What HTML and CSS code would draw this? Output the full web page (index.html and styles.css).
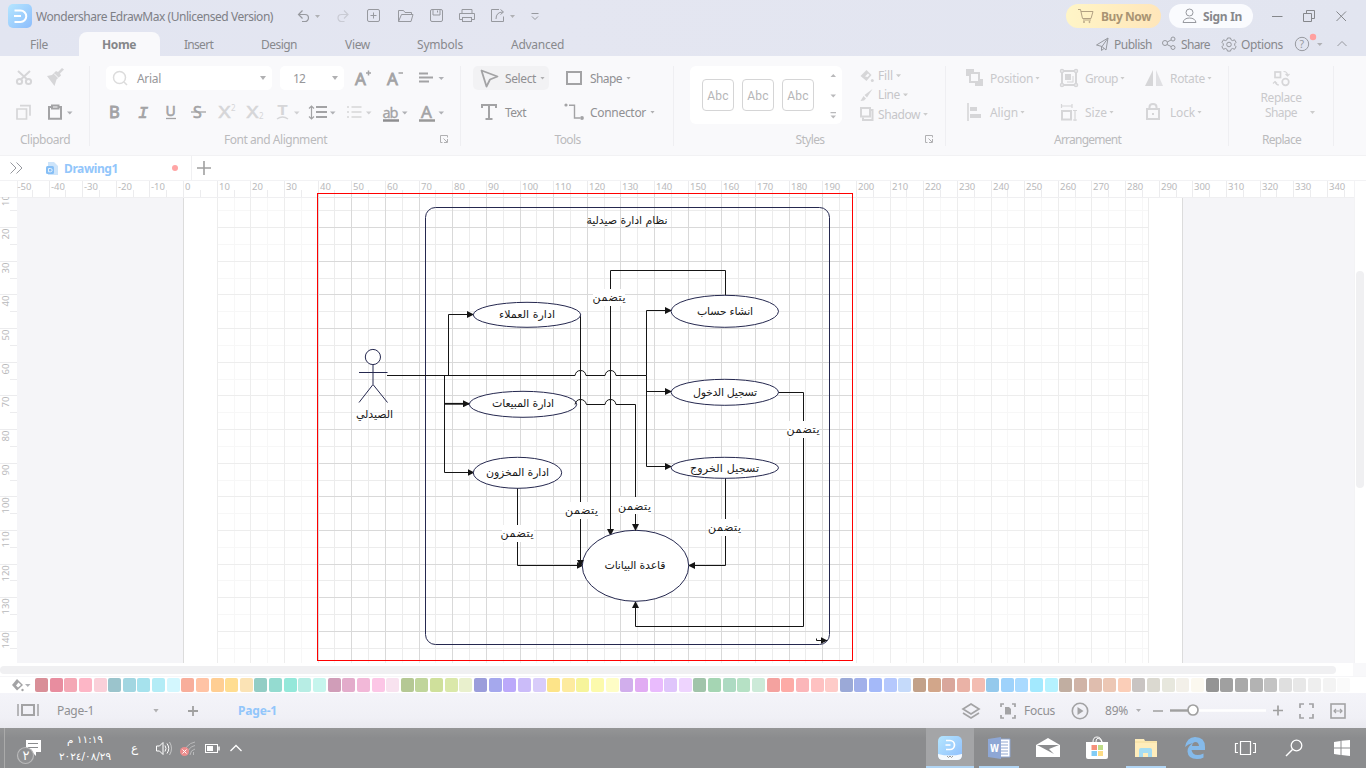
FILE: index.html
```html
<!DOCTYPE html>
<html lang="en">
<head>
<meta charset="utf-8">
<title>Wondershare EdrawMax</title>
<link rel="stylesheet" href="styles.css">
</head>
<body>
<div class="app">
  <header class="head">
    <div class="titlebar">
      <svg class="logo" width="24" height="24" viewBox="0 0 24 24"><defs><linearGradient id="lg" x1="0" y1="0" x2="1" y2="1"><stop offset="0" stop-color="#b5e6ff"/><stop offset="1" stop-color="#8dbdfc"/></linearGradient></defs><rect width="24" height="24" rx="5" fill="url(#lg)"/><path d="M6.500 6.500h6a5.500 5.500 0 0 1 0 11.500h-6M6 12h7" fill="none" stroke="#fff" stroke-width="2"/></svg>
      <span class="app-name"><span class="t" data-w="237">Wondershare EdrawMax (Unlicensed Version)</span></span>
      <svg class="i" width="28" height="20" viewBox="296 6 28 20"><path d="M302.500 10.500l-4 4 4 4M299 14.500h6a3.500 3.500 0 0 1 0 7h-3" stroke-width="1.200"/><path class="c" d="M315 15h5l-2.500 3z"/></svg>
      <svg class="i off" width="16" height="20" viewBox="335 6 16 20"><path d="M344 10.500l4 4-4 4M347.500 14.500h-6a3.500 3.500 0 0 0 0 7h3" stroke-width="1.200"/></svg>
      <svg class="i" width="16" height="20" viewBox="366 6 16 20"><rect x="367.500" y="9.500" width="12" height="12" rx="1.500"/><path d="M373.500 12.500v6M370.500 15.500h6"/></svg>
      <svg class="i" width="18" height="20" viewBox="397 6 18 20"><path d="M398.500 21.500v-11h5l1.500 2h6.500v2M398.500 21.500l3-7h11.500l-2 7z"/></svg>
      <svg class="i" width="16" height="20" viewBox="429 6 16 20"><rect x="430.500" y="9.500" width="12" height="12" rx="1.500"/><path d="M433 9.500v5.500h7v-5.500M437.500 10.500v2"/></svg>
      <svg class="i" width="18" height="20" viewBox="458 6 18 20"><path d="M462 13v-3.500h10V13M462 19.500h-2.500v-6h15v6H472"/><rect x="462.500" y="17.500" width="9" height="4"/></svg>
      <svg class="i" width="26" height="20" viewBox="490 6 26 20"><path d="M499 9.500h-7.500v12h12v-5M496 19q0-7 7-7M500.500 9.500l3 2.500-3 2.500"/><path class="c" d="M510 15h5l-2.500 3z"/></svg>
      <svg class="i" width="10" height="20" viewBox="530 6 10 20"><path d="M531.500 13.500h7M532 16.500l3 3 3-3"/></svg>
      <div class="buy"><svg class="i" width="16" height="16" viewBox="0 0 16 16"><path d="M0 1.500h2.500l2 9h8.500l2-7H3M5 12h8"/><circle cx="6" cy="14" r=".6"/><circle cx="11.500" cy="14" r=".6"/></svg><b class="t" data-w="50">Buy Now</b></div>
      <div class="sign"><svg class="i" width="15" height="16" viewBox="0 0 15 16"><circle cx="7.500" cy="4.500" r="3.500"/><path d="M1 14.500q1-4.500 6.500-4.500t6.500 4.500z"/></svg><b class="t" data-w="39">Sign In</b></div>
      <svg class="i w" width="12" height="20" viewBox="1271 6 12 20"><path d="M1272 16.500h10.500"/></svg>
      <svg class="i w" width="14" height="20" viewBox="1302 6 14 20"><path d="M1303.500 13.500h8v8h-8zM1306.500 13v-2.500h8v8h-2.500"/></svg>
      <svg class="i w" width="12" height="20" viewBox="1335 6 12 20"><path d="M1336.500 11.500l9.500 9.500M1346 11.500l-9.500 9.500"/></svg>
    </div>
    <nav class="menubar">
      <span class="t" data-w="18">File</span>
      <div class="tab-on"><b class="t" data-w="34">Home</b></div>
      <span class="t" data-w="29">Insert</span><span class="t" data-w="36">Design</span><span class="t" data-w="25">View</span><span class="t" data-w="46">Symbols</span><span class="t" data-w="53">Advanced</span>
      <svg class="i" width="16" height="18" viewBox="1095 36 16 18"><path d="M1096.500 46l11.500-7-2 12-4-3.500zM1102 47.500l6-8.500M1101.500 47.500v4l2.500-2"/></svg><span class="t" data-w="38">Publish</span>
      <svg class="i" width="16" height="18" viewBox="1161 36 16 18"><circle cx="1165" cy="44" r="2.500"/><circle cx="1173" cy="40" r="2"/><circle cx="1173" cy="48.500" r="2"/><path d="M1167.300 43l3.700-2M1167 45.500l4 2"/></svg><span class="t" data-w="29">Share</span>
      <svg class="i" width="16" height="18" viewBox="1221 35 16 18"><path d="M1227.500 38h3l.6 1.900 1.500.7 1.900-.8 1.600 2.500-1.400 1.500v1.500l1.400 1.500-1.600 2.500-1.900-.8-1.500.7-.6 1.900h-3l-.6-1.900-1.500-.7-1.900.8-1.600-2.500 1.400-1.500v-1.500l-1.400-1.500 1.600-2.500 1.900.8 1.500-.7z"/><circle cx="1229" cy="44.500" r="2.300"/></svg><span class="t" data-w="42">Options</span>
      <svg class="i" width="29" height="22" viewBox="1294 33 29 22"><circle cx="1302" cy="44" r="6.700"/><text x="1299.500" y="48" font-size="10.500" class="f">?</text><circle cx="1313" cy="37" r="3.200" fill="#ffa09f" stroke="none"/><path class="c" d="M1317 43h5.500l-2.700 3z"/></svg>
      <svg class="i" width="12" height="18" viewBox="1336 35 12 18"><path d="M1337.500 46l4.500-4.500 4.500 4.500"/></svg>
    </nav>
  </header>

  <section class="ribbon">
    <div class="group g-clip">
      <div class="row r-clip1">
        <svg class="k off" width="18" height="20" viewBox="15 68 18 20"><circle cx="19.500" cy="81.500" r="2.600"/><circle cx="28.500" cy="81.500" r="2.600"/><path d="M18 71l9 8.300M30 71l-9 8.300"/></svg>
        <svg class="k off" width="18" height="20" viewBox="46 68 18 20"><path class="f" d="M47 76l5-1 4-4 2 1 4-4 2 1.500-4 4 1 2-4.500 4-2 6.500z"/><path d="M54 73.500l5.500 5.500" stroke="#f9f9fb" stroke-width="1"/></svg>
      </div>
      <div class="row r-clip2">
        <svg class="k off" width="18" height="20" viewBox="15 102 18 20"><path d="M17 109h9.500v10H17zM20 105.700h10v10" stroke-width="1.700"/></svg>
        <svg class="k" width="26" height="20" viewBox="47 102 26 20"><path d="M52 107h-3v11.700h12V107h-3"/><path d="M52 105.500h6.500v3H52z"/><path class="c" d="M67 111.500h5.500l-2.700 3z"/></svg>
      </div>
      <div class="cap"><span class="t" data-w="50">Clipboard</span></div>
    </div>
    <div class="group g-font">
      <div class="row r-font1">
        <div class="box font-box"><svg width="16" height="18" viewBox="112 69 16 18"><circle cx="119.500" cy="77.500" r="6" fill="none" stroke="#dcdcdc" stroke-width="1.500"/><path d="M124 82l3 3" stroke="#dcdcdc" stroke-width="1.500"/></svg><span class="t" data-w="24">Arial</span><i class="car"></i></div>
        <div class="box size-box"><span class="t" data-w="12">12</span><i class="car"></i></div>
        <svg class="k" width="18" height="20" viewBox="354 68 18 20"><text x="355" y="85" font-size="17" class="f" stroke="#a3a3a5" stroke-width=".8" textLength="12">A</text><path d="M368.500 70.500v5M366 73h5" stroke-width="1.500"/></svg>
        <svg class="k" width="18" height="20" viewBox="386 68 18 20"><text x="387" y="85" font-size="17" class="f" stroke="#a3a3a5" stroke-width=".8" textLength="12">A</text><path d="M398.500 73h4.500" stroke-width="1.500"/></svg>
        <svg class="k" width="26" height="20" viewBox="418 68 26 20"><path d="M419 73.500h9M419 77.500h14M419 81.500h10" stroke-width="1.800"/><path class="c" d="M438.500 77h5.500l-2.700 3z"/></svg>
      </div>
      <div class="row r-font2">
        <svg class="k" width="14" height="22" viewBox="108 101 14 22"><text x="109" y="118" font-size="16.500" class="f" stroke="#a3a3a5" stroke-width=".9">B</text></svg>
        <svg class="k" width="14" height="22" viewBox="137 101 14 22"><text x="138" y="118" font-size="17" class="f mono" font-style="italic" stroke="#a3a3a5" stroke-width=".7">I</text></svg>
        <svg class="k" width="14" height="22" viewBox="164 101 14 22"><text x="165.500" y="116" font-size="14" class="f" stroke="#a3a3a5" stroke-width=".6">U</text><path d="M166 118.500h10" stroke-width="1.300"/></svg>
        <svg class="k" width="16" height="22" viewBox="191 101 16 22"><text x="193" y="118" font-size="16" class="f" stroke="#a3a3a5" stroke-width=".6">S</text><path d="M191 112h15" stroke-width="1.300"/></svg>
        <svg class="k off" width="18" height="22" viewBox="218 101 18 22"><text x="218.500" y="118" font-size="16" class="f" textLength="12" lengthAdjust="spacingAndGlyphs" stroke="#d6d6d8" stroke-width=".5">X</text><text x="231" y="111" font-size="8" class="f">2</text></svg>
        <svg class="k off" width="18" height="22" viewBox="246 101 18 22"><text x="246.500" y="118" font-size="16" class="f" textLength="12" lengthAdjust="spacingAndGlyphs" stroke="#d6d6d8" stroke-width=".5">X</text><text x="259" y="119" font-size="8" class="f">2</text></svg>
        <svg class="k off" width="24" height="22" viewBox="276 101 24 22"><text x="277" y="115" font-size="15" class="f mono" font-weight="bold" textLength="11" lengthAdjust="spacingAndGlyphs">T</text><path d="M277 119q5.500-4 11 0" stroke-width="1.400"/><path class="c" d="M294 111.500h5.500l-2.700 3z"/></svg>
        <svg class="k" width="28" height="22" viewBox="308 101 28 22"><path d="M311.500 106v13M309 108.500l2.500-2.500 2.500 2.500M309 116.500l2.500 2.500 2.500-2.500" stroke-width="1.200"/><path d="M316 107h11M316 112h11M316 117h11"/><path class="c" d="M330 111.500h5.500l-2.700 3z"/></svg>
        <svg class="k off" width="26" height="22" viewBox="346 101 26 22"><path d="M351.500 107h10M351.500 112h10M351.500 117h10M347 107h2M347 112h2M347 117h2" stroke-width="1.400"/><path class="c" d="M366 111.500h5.500l-2.700 3z"/></svg>
        <svg class="k" width="26" height="22" viewBox="382 101 26 22"><text x="382.500" y="118" font-size="14.500" class="f" stroke="#a3a3a5" stroke-width=".3" textLength="16">ab</text><path d="M383 120.500h16" stroke="#8e8e90" stroke-width="2.500"/><path class="c" d="M402 111.500h5.500l-2.700 3z"/></svg>
        <svg class="k" width="26" height="22" viewBox="418 101 26 22"><text x="421" y="118" font-size="17" class="f" stroke="#a3a3a5" stroke-width=".6">A</text><path d="M419 120.500h16" stroke="#999" stroke-width="2.500"/><path class="c" d="M438.500 111.500h5.500l-2.700 3z"/></svg>
      </div>
      <div class="cap"><span class="t" data-w="103">Font and Alignment</span><svg class="launch" width="10" height="10" viewBox="0 0 10 10"><path d="M3.500 8.500h-2v-7h7v2M4.500 4.500l3.500 3.500M8.500 5v3.500H5"/></svg></div>
    </div>
    <div class="group g-tools">
      <div class="row r-tools1">
        <div class="sel"><svg class="k" width="20" height="20" viewBox="480 68 20 20"><path d="M481.500 70.500l16 6-7.500 3-3.500 7z" stroke-width="1.800" stroke-linejoin="round"/></svg><span class="t" data-w="31">Select</span><i class="car s"></i></div>
        <svg class="k" width="18" height="20" viewBox="565 68 18 20"><rect x="567" y="72" width="14" height="12"/></svg>
        <span class="on"><span class="t" data-w="32">Shape</span></span><i class="car s"></i>
      </div>
      <div class="row r-tools2">
        <svg class="k" width="18" height="20" viewBox="480 102 18 20"><path d="M482 108v-3h14v3M489 105v14M485.500 119h7" /></svg>
        <span class="on"><span class="t" data-w="21">Text</span></span>
        <svg class="k" width="22" height="20" viewBox="563 102 22 20"><circle cx="566" cy="105" r="1.600" class="f"/><circle cx="582" cy="118" r="1.900" class="f"/><path d="M569 105.200h5.500V118h5.500" stroke-width="1.400"/></svg>
        <span class="on"><span class="t" data-w="56">Connector</span></span><i class="car s"></i>
      </div>
      <div class="cap"><span class="t" data-w="26">Tools</span></div>
    </div>
    <div class="group g-styles">
      <div class="styles-body">
        <div class="gallery"><span>Abc</span><span>Abc</span><span>Abc</span>
          <svg width="8" height="50" viewBox="829 70 8 50"><path fill="#b9b9bb" d="M830.500 77h5.500l-2.700-3zM830.500 94.500h5.500l-2.700 3zM830.500 115.500h5.500l-2.700 3zM830.500 112h5.500v1.200h-5.500z"/></svg></div>
        <div class="fmt">
          <div><svg class="k off" width="14" height="14" viewBox="860 68 14 14"><path class="f" d="M860.500 75l6-6 5 5-5 6z"/><path d="M865 75.500l3-3 1.500 1.500-2 2z" fill="#f9f9fb" stroke="none"/><circle cx="872.300" cy="79.500" r="1.500" class="f"/></svg><span class="t" data-w="15">Fill</span><i class="car s"></i></div>
          <div><svg class="k off" width="14" height="14" viewBox="860 89 14 14"><path class="f" d="M872.500 90l-8 6 2.500 2.500zM863.500 97l2.500 2.500-2 2-3.500.5z"/></svg><span class="t" data-w="22">Line</span><i class="car s"></i></div>
          <div><svg class="k off" width="14" height="14" viewBox="860 109 14 14"><path d="M863 119.500v2.500h9.500v-10H871" /><rect x="861" y="110" width="9" height="8.500"/></svg><span class="t" data-w="42">Shadow</span><i class="car s"></i></div>
        </div>
      </div>
      <div class="cap"><span class="t" data-w="29">Styles</span><svg class="launch" width="10" height="10" viewBox="0 0 10 10"><path d="M3.500 8.500h-2v-7h7v2M4.500 4.500l3.500 3.500M8.500 5v3.500H5"/></svg></div>
    </div>
    <div class="group g-arr">
      <div class="row r-arr">
        <svg class="k off" width="18" height="20" viewBox="966 68 18 20"><path class="f" d="M966 69h8v3h-4v4h-4zM983 86h-8v-3h4v-4h4z"/><rect x="970" y="73" width="9" height="9"/></svg><span><span class="t" data-w="43">Position</span><i class="car s"></i></span>
        <svg class="k off" width="18" height="20" viewBox="1060 68 18 20"><rect x="1062" y="71" width="14" height="14"/><path class="f" d="M1065 74h6v6h-6zM1072.500 76h1v6.500h-6.500v-1h5.500z"/><g fill="#f9f9fb" stroke-width="1.500"><circle cx="1062" cy="71" r="1.500"/><circle cx="1076" cy="71" r="1.500"/><circle cx="1062" cy="85" r="1.500"/><circle cx="1076" cy="85" r="1.500"/></g></svg><span><span class="t" data-w="33">Group</span><i class="car s"></i></span>
        <svg class="k off" width="18" height="20" viewBox="1145 68 18 20"><path class="f" d="M1153 70v16h-8z"/><path class="f" d="M1156 70v16h7z" opacity=".7"/></svg><span><span class="t" data-w="35">Rotate</span><i class="car s"></i></span>
      </div>
      <div class="row r-arr">
        <svg class="k off" width="18" height="20" viewBox="966 102 18 20"><path d="M968 103v18" stroke-width="1.600"/><path class="f" d="M970 107h7v4h-7zM970 114h11v4h-11z"/></svg><span><span class="t" data-w="28">Align</span><i class="car s"></i></span>
        <svg class="k off" width="18" height="20" viewBox="1060 102 18 20"><rect x="1062" y="111" width="9" height="8.500"/><path d="M1061 106h11M1061.500 104v4M1072 104v4M1075 110v11M1073 110.500h4M1073 120h4" stroke-width="1.200"/></svg><span><span class="t" data-w="22">Size</span><i class="car s"></i></span>
        <svg class="k off" width="18" height="20" viewBox="1145 102 18 20"><rect x="1147" y="109" width="12" height="10"/><path d="M1149.500 109v-2q0-3 3.500-3t3.500 3v2M1153 113v2"/></svg><span><span class="t" data-w="25">Lock</span><i class="car s"></i></span>
      </div>
      <div class="cap"><span class="t" data-w="67">Arrangement</span></div>
    </div>
    <div class="group g-rep">
      <svg class="k off" width="18" height="20" viewBox="1272 68 18 20"><rect x="1275" y="72" width="5.500" height="5.500" stroke-width="1.700"/><circle cx="1285.500" cy="82" r="3.300" stroke-width="1.700"/><path d="M1283.500 71.500q4 0 4 4M1285.500 74l2 2 2-2M1279 85q-3 0-4-3.500M1273 83.500l2-2 2 2" stroke-width="1.200"/></svg>
      <div class="rep-text"><span class="t" data-w="41">Replace</span><span class="rep2"><span class="t" data-w="32">Shape</span><i class="car s"></i></span></div>
      <div class="cap"><span class="t" data-w="39">Replace</span></div>
    </div>
  </section>

  <div class="doctabs">
    <svg class="i" width="14" height="16" viewBox="9 160 14 16"><path d="M10.500 162.500l5.500 5.500-5.500 5.500M16.500 162.500l5.500 5.500-5.500 5.500"/></svg>
    <svg width="14" height="16" viewBox="45 160 14 16"><path d="M48 162h6l4 4v9H48z" fill="#cde4fa"/><rect x="46" y="166" width="8" height="8" rx="1.500" fill="#86bff6"/><path d="M48.500 168.500h2a1.600 1.600 0 0 1 0 3.300h-2z" fill="none" stroke="#e8f3fd"/></svg>
    <b class="blue"><span class="t" data-w="54">Drawing1</span></b>
    <i class="dot"></i><i class="sep"></i>
    <svg width="16" height="16" viewBox="0 0 16 16"><path d="M8 1v14M1 8h14" stroke="#a0a0a0" stroke-width="1.600"/></svg>
  </div>

  <main class="work">
    <svg class="stage" width="1354" height="483" viewBox="0 180 1354 483">
      <defs>
        <marker id="ar" viewBox="0 0 7 7" refX="6.500" refY="3.500" markerWidth="7" markerHeight="7" markerUnits="userSpaceOnUse" orient="auto"><path d="M0 0l7 3.500-7 3.500z" fill="#151515"/></marker>
      </defs>
      <rect x="17" y="197" width="1337" height="466" fill="#f5f5f8"/>
      <rect x="183" y="197" width="1000" height="466" fill="#fff"/>
      <path d="M183.500 198v465M1182.500 198v465" stroke="#dcdcdc"/>
      <g id="ruler" shape-rendering="crispEdges"></g>
      <g id="grid" shape-rendering="crispEdges"></g>
      <rect x="317.500" y="193.500" width="535" height="467" fill="none" stroke="#f00" shape-rendering="crispEdges"/>
      <rect class="node" x="425.500" y="207.500" width="404" height="437" rx="10" style="fill:none"/>
      <g class="wire">
        <path d="M387 375.500h188q1-5 5.500-5t5.500 5h19q1-5 5.500-5t5.500 5H646.500"/>
        <path marker-end="url(#ar)" d="M448.500 375.500v-61H473.500"/>
        <path marker-end="url(#ar)" d="M444.500 375.500v97H474"/>
        <path marker-end="url(#ar)" d="M444.500 403.800H469.500" stroke-width="1.800"/>
        <path marker-end="url(#ar)" d="M580.500 314v252"/>
        <path marker-end="url(#ar)" d="M725.500 295v-24.500H610.500V535.500"/>
        <path marker-end="url(#ar)" d="M646.500 375.500v-65H671.500"/>
        <path marker-end="url(#ar)" d="M646.500 391.500H671.500"/>
        <path marker-end="url(#ar)" d="M646.500 375.500v91H671.500"/>
        <path marker-end="url(#ar)" d="M778 392.500h25.500v234H635.500V601.500"/>
        <path marker-end="url(#ar)" d="M725.500 478v87.500H688.500"/>
        <path marker-end="url(#ar)" d="M517.500 488v77.500H583"/>
        <path marker-end="url(#ar)" d="M816.500 638.500v2h10.500"/>
      </g>
      <g class="node">
        <circle cx="372.900" cy="357" r="7.600"/><path d="M373 364.600v19.700M359 372.500h28.500M359 402.500l14-18 14.500 18" style="fill:none"/>
        <ellipse cx="527" cy="314.800" rx="53.700" ry="12.500"/>
        <ellipse cx="523" cy="404.300" rx="53.700" ry="13"/>
        <ellipse cx="517.500" cy="472.800" rx="44.200" ry="15.500"/>
        <ellipse cx="724.800" cy="311.300" rx="53.700" ry="16"/>
        <ellipse cx="724.800" cy="392.300" rx="53.700" ry="13"/>
        <ellipse cx="724.800" cy="467.800" rx="53.700" ry="10.500"/>
        <ellipse cx="635.500" cy="565.800" rx="53.200" ry="35.500"/>
      </g>
      <g class="wire"><path marker-end="url(#ar)" d="M575 404.500q1-5 5.500-5t6 5h18.500q1-5 5.500-5t5.500 5h19.500V530.500"/><path marker-end="url(#ar)" d="M580.500 550v16"/></g>
      <g fill="#fff"><rect x="593" y="289" width="32" height="17"/><rect x="787" y="421" width="32" height="17"/><rect x="566" y="502" width="32" height="17"/><rect x="619" y="497" width="32" height="17"/><rect x="709" y="519" width="32" height="17"/><rect x="502" y="525" width="32" height="17"/></g>
      <g class="ar">
        <text x="627" y="224" textLength="81">نظام ادارة صيدلية</text>
        <text x="374.500" y="418" textLength="37">الصيدلي</text>
        <text x="527" y="318" textLength="56">ادارة العملاء</text>
        <text x="523" y="407" textLength="62">ادارة المبيعات</text>
        <text x="517.500" y="476" textLength="63">ادارة المخزون</text>
        <text x="725" y="315" textLength="56">انشاء حساب</text>
        <text x="725" y="395.500" textLength="64">تسجيل الدخول</text>
        <text x="724.500" y="472" textLength="69">تسجيل الخروج</text>
        <text x="635" y="569" textLength="61">قاعدة البيانات</text>
        <text x="609" y="300.500" textLength="33">يتضمن</text>
        <text x="803" y="432.500" textLength="33">يتضمن</text>
        <text x="581.500" y="514" textLength="33">يتضمن</text>
        <text x="634.500" y="509.500" textLength="33">يتضمن</text>
        <text x="724.500" y="531" textLength="33">يتضمن</text>
        <text x="517" y="537" textLength="33">يتضمن</text>
      </g>
    </svg>
    <div class="vscroll"><i></i></div>
  </main>
  <div class="hscroll"><i></i><b></b></div>
  <div class="palette"><svg class="k" width="22" height="16" viewBox="11 677 22 16"><path class="f" d="M12 685l5-6 6 6-6 5.500z"/><path d="M16 685.500l2.500-3 2.500 2.500-3 2.500z" fill="#fff" stroke="none"/><circle cx="22.500" cy="690" r="1.200" class="f"/><path class="c" d="M25 684h5.500l-2.700 3z"/></svg><div id="swatches"></div></div>

  <div class="pagebar">
    <svg class="k" width="24" height="18" viewBox="16 702 24 18"><rect x="22" y="705" width="12" height="10"/><path d="M18 704v12M38 704v12" stroke-width="1.500"/></svg>
    <span class="on"><span class="t" data-w="37">Page-1</span></span><i class="car"></i>
    <svg width="12" height="12" viewBox="0 0 12 12"><path d="M6 1v10M1 6h10" stroke="#a0a0a0" stroke-width="1.800"/></svg>
    <b class="blue"><span class="t" data-w="39">Page-1</span></b>
    <svg class="k" width="20" height="20" viewBox="961 701 20 20"><path d="M971 704l8 5-8 5-8-5zM963 713l8 5 8-5" stroke-width="1.700"/></svg>
    <svg class="k" width="18" height="18" viewBox="999 702 18 18"><path d="M1004 704h-3v3M1012 704h3v3M1004 718h-3v-3M1012 718h3v-3" stroke-width="1.700"/><path class="f" d="M1005 707h4l2 2v5.500h-6z"/></svg>
    <span class="on"><span class="t" data-w="31">Focus</span></span>
    <svg class="k" width="18" height="18" viewBox="1071 702 18 18"><circle cx="1080" cy="711" r="7.700" stroke-width="1.600"/><path class="f" d="M1077.500 707l6 4-6 4z"/></svg>
    <span class="on"><span class="t" data-w="23">89%</span></span><i class="car s"></i>
    <svg width="132" height="16" viewBox="1152 704 132 16"><path d="M1153 712h10M1273 711.500h10M1278 706.500v10" stroke="#a0a0a0" stroke-width="1.700"/><path d="M1170 711.500h96" stroke="#fff" stroke-width="2.500"/><path d="M1170 711.500h20" stroke="#a0a0a0" stroke-width="2.500"/><circle cx="1193" cy="711" r="5" fill="#fff" stroke="#a0a0a0" stroke-width="1.700"/></svg>
    <svg class="k" width="18" height="18" viewBox="1298 703 18 18"><path d="M1304 705h-4v4M1309 705h4v4M1304 719h-4v-4M1309 719h4v-4" stroke-width="1.700"/></svg>
    <svg class="k" width="18" height="18" viewBox="1329 702 18 18"><rect x="1331" y="704" width="14" height="14" stroke-width="1.600"/><path d="M1334 711h8M1336 709l-2 2 2 2M1340 709l2 2-2 2" stroke-width="1.200"/></svg>
  </div>

  <footer class="taskbar">
    <svg width="42" height="40" viewBox="0 728 42 40"><path d="M4.500 728v40" stroke="#aaa"/><path d="M26 740h15v12h-5v4l-4-4h-6z" fill="#fff"/><path d="M28 743.500h10M28 747.500h10" stroke="#8b8c8e"/><circle cx="25.500" cy="755.500" r="8" fill="#8f9092" stroke="#b9b9ba" stroke-width="1.200"/><text x="22.500" y="760" font-size="13" fill="#fff" class="arf">٢</text></svg>
    <div class="clock"><span dir="rtl">١١:١٩ م</span><span class="date">٢٠٢٤/٠٨/٢٩</span></div>
    <span class="lang">ع</span>
    <svg class="s" width="18" height="20" viewBox="155 738 18 20"><path d="M156.500 746v5h3l3.500 3.500v-12l-3.500 3.500zM165 745.500q2 3 0 6M167 743.500q3.500 5 0 10"/><path d="M169.500 742q4 6.500 0 13" opacity=".5"/></svg>
    <svg class="s" width="18" height="20" viewBox="179 738 18 20"><g opacity=".4"><path d="M184 755q1-11 11-13M187 755q1-8 8-9.500M190 755q.500-5 5-6"/><path d="M193.500 755v-3"/></g><circle cx="184.500" cy="751.500" r="4.500" fill="#ec8d8d" stroke="none"/><path d="M182.500 749.500l4 4M186.500 749.500l-4 4"/></svg>
    <svg class="s" width="16" height="20" viewBox="204 738 16 20"><rect x="205.500" y="744.500" width="12" height="8"/><path d="M207 746h6v5h-6z" fill="#fff" stroke="none"/><path d="M219 746.500v4" stroke-width="1.500"/></svg>
    <svg class="s" width="14" height="20" viewBox="229 738 14 20"><path d="M230.500 751l5.500-5.500 5.500 5.500" stroke-width="1.300"/></svg>
    <div class="apps">
      <div class="a hot"><svg width="24" height="24" viewBox="0 0 24 24"><rect width="24" height="24" rx="5" fill="url(#lg)"/><path d="M0 18q12 3 24 0v1q0 5-5 5H5q-5 0-5-5z" fill="#f6fafd"/><path d="M8 4.500h4a4.500 4.500 0 0 1 0 9H8M7.500 9h5" fill="none" stroke="#fff" stroke-width="1.700"/><path d="M9 20l1.500 1.500L12 20l1.500 1.500L15 20" fill="none" stroke="#999"/></svg></div>
      <div class="a u"><svg width="24" height="24" viewBox="0 0 24 24"><path d="M12 3h11v18H12z" fill="#fff" stroke="#8fa6cf"/><path d="M14 6h7M14 9h7M14 12h7M14 15h7M14 18h7" stroke="#8fa6cf"/><path d="M1 3l13-2v22L1 21z" fill="#8ea7d5"/><text x="3" y="16" font-size="11" font-weight="bold" fill="#fff" textLength="9" lengthAdjust="spacingAndGlyphs">W</text></svg></div>
      <div class="a"><svg width="24" height="24" viewBox="0 0 24 24"><path d="M0 9l12-7 12 7v12H0z" fill="#fff"/><path d="M1 9h22L13 13l5 5L3 10z" fill="#8b8c8e"/></svg></div>
      <div class="a"><svg width="24" height="24" viewBox="0 0 24 24"><path d="M1 6h22v15q0 2-2 2H3q-2 0-2-2z" fill="#fff"/><path d="M8 6q0-5 4-5t5 5M11 6q0-5 4-3l2 3" fill="none" stroke="#fff"/><path d="M6.500 9H12v5H6.500z" fill="#f5917b"/><path d="M13 9h5v5h-5z" fill="#bfdd88"/><path d="M6.500 15H12v5H6.500z" fill="#82ccf5"/><path d="M13 15h5v5h-5z" fill="#fddc86"/></svg></div>
      <div class="a u"><svg width="24" height="24" viewBox="0 0 24 24"><path d="M1 3h9l1 2h12v16H1z" fill="#ffedbb"/><path d="M1 6h22" stroke="#f3dc9b"/><path d="M5 21v-7q0-2 2-2h9q2 0 2 2v7h-4v-4H9v4z" fill="#a5ddf3"/></svg></div>
      <div class="a"><svg width="24" height="24" viewBox="0 0 24 24"><path d="M2 11Q4 1 12 1q10 0 10 10v3H8.500q1 5 6 5 3 0 6-1.500v4Q18 23 14 23 5 23 4.500 15.500 4.500 10 10 7 5 8 2 11zM9 10h7q-.500-4-3.500-4T9 10z" fill="#85baea"/></svg></div>
      <div class="a"><svg class="s" width="24" height="24" viewBox="0 0 24 24"><path d="M8.500 5.500h10v13h-10zM6 7.500H3.500v9H6M21 7.500h2.500v9H21" stroke-width="1.200"/></svg></div>
      <div class="a"><svg class="s" width="24" height="24" viewBox="0 0 24 24"><circle cx="15.500" cy="9.500" r="5.300" stroke-width="1.300"/><path d="M11.500 13.500L5 20" stroke-width="1.400"/></svg></div>
      <div class="a"><svg width="24" height="24" viewBox="0 0 24 24"><path d="M4 6l6.500-1v6.500H4zM11.500 4.800L20 4v7.500h-8.500zM4 12.500h6.500V19L4 18zM11.500 12.500H20V20l-8.500-1z" fill="#fff"/></svg></div>
    </div>
  </footer>
</div>
<script src="script.js"></script>
</body>
</html>
```
FILE: styles.css
```css
* { box-sizing: border-box; }
body { margin: 0; font: 12px "Noto Sans", "Open Sans", sans-serif; color: #88898d; background: #fff; overflow: hidden; }
.app { width: 1366px; height: 768px; display: flex; flex-direction: column; }
svg { display: block; }
.t { display: inline-block; white-space: nowrap; justify-self: start; }
.i { fill: none; stroke: #97999f; stroke-width: 1; overflow: visible; }
.i .c, .k .c { fill: #b0b1b5; stroke: none; }
.i.off { stroke: #c9cbd4; }
.i.w { stroke: #85878b; }
.i .f { fill: #97999f; stroke: none; }
.k { fill: none; stroke: #a3a3a5; stroke-width: 2; overflow: visible; }
.k .f { fill: #a3a3a5; }
.k path.f, .k circle.f { stroke: none; }
.k text { font-family: "Noto Sans", sans-serif; }
.k text:not([stroke]) { stroke: none; }
.k text.mono { font-family: "Liberation Mono", monospace; }
.k.off { stroke: #d6d6d8; }
.k.off .f { fill: #d6d6d8; }
.k.off .c { fill: #d0d0d2; }
.car { display: inline-block; width: 6px; height: 4px; background: #b0b0b2; clip-path: polygon(0 0, 100% 0, 50% 100%); }
.car.s { width: 5px; height: 3px; }

.head { height: 56px; background: linear-gradient(90deg, #e2e5f1, #e4e6f1 40%, #e2e5f0); }
.titlebar { height: 32px; display: grid; align-items: center; padding-left: 8px;
  grid-template-columns: 28px 260px 39px 31px 31px 32px 29px 32px 40px 536px 103px 102px 31px 33px 20px; }
.app-name { color: #7e8086; }
.buy, .sign { height: 24px; border-radius: 12px; display: flex; align-items: center; gap: 6px; }
.buy { width: 95px; padding-left: 12px; background: linear-gradient(90deg, #fff5c7, #ffe6ba); color: #a99473; gap: 7px; }
.buy .i { stroke: #b3a284; }
.sign { width: 84px; padding-left: 13px; background: #fafbfe; color: #87888c; }
.menubar { height: 24px; display: grid; align-items: center; padding-left: 30px;
  grid-template-columns: 49px 105px 77px 84px 72px 94px 584px 19px 47px 20px 40px 20px 53px 42px 20px; }
.tab-on { width: 81px; height: 24px; border-radius: 8px 8px 0 0; background: #f9f9fb; padding: 4px 0 0 23px; color: #85878a; }

.ribbon { height: 99px; background: #f9f9fb; display: flex; color: #c9c9cc; padding-top: 10px; }
.group { height: 80px; border-right: 1px solid #efeff2; flex: none; }
.g-clip { width: 90px; } .g-font { width: 371px; } .g-tools { width: 213px; } .g-styles { width: 272px; } .g-arr { width: 283px; } .g-rep { width: 105px; }
.row { height: 24px; display: grid; align-items: center; margin-bottom: 10px; }
.cap { height: 16px; margin-top: -3px; padding-left: 1px; display: flex; justify-content: center; align-items: center; color: #bbbbbd; position: relative; }
.launch { position: absolute; right: 11px; top: 3px; fill: none; stroke: #b0b0b2; }
.r-clip1, .r-clip2 { padding-left: 15px; grid-template-columns: 31px 30px; }
.r-clip2 { grid-template-columns: 32px 30px; }
.r-font1 { padding-left: 16px; grid-template-columns: 174px 74px 32px 32px 30px; }
.r-font2 { padding-left: 18px; grid-template-columns: 29px 27px 27px 27px 28px 30px 32px 38px 36px 36px 26px; }
.box { height: 24px; background: #fff; border-radius: 5px; display: flex; align-items: center; color: #97979a; }
.font-box { width: 166px; padding: 0 6px; } .font-box svg { margin-right: 9px; } .font-box .car, .size-box .car { margin-left: auto; }
.size-box { width: 64px; padding: 0 6px 0 13px; }
.on, .sel { color: #909093; }
.r-tools1 { padding-left: 12px; grid-template-columns: 92px 25px 36px 6px; }
.sel { width: 76px; height: 24px; border-radius: 5px; background: #f2f2f4; display: grid; grid-template-columns: 25px 35px 6px; padding-left: 7px; align-items: center; }
.r-tools2 { padding-left: 19px; grid-template-columns: 25px 58px 27px 60px 6px; }
.styles-body { height: 58px; margin-bottom: 10px; padding-left: 16px; display: flex; gap: 18px; }
.gallery { width: 152px; height: 58px; border-radius: 6px; background: #fff; padding: 0 0 0 12px; display: grid; grid-template-columns: 40px 40px 47px 8px; align-items: center; }
.gallery span { width: 32px; height: 32px; border: 1px solid #d5d5d6; border-radius: 4px; text-align: center; line-height: 32px; font-family: Roboto, sans-serif; color: #b5b5b7; letter-spacing: .3px; }
.fmt { display: flex; flex-direction: column; color: #c6c6c9; }
.fmt div { height: 20px; display: flex; align-items: center; }
.fmt svg { margin-right: 4px; } .fmt .car { margin-left: 3px; background: #ccc; }
.g-arr .row { padding-left: 20px; grid-template-columns: 24px 70px 25px 60px 25px 60px; }
.g-arr .row > span { display: flex; align-items: center; } .g-arr .car { margin-left: 2px; background: #ccc; }
.g-rep > svg { margin: 2px 0 0 43px; }
.rep-text { height: 46px; width: 104px; display: flex; flex-direction: column; align-items: center; line-height: 15px; padding-top: 2px; }
.rep2 { display: flex; align-items: center; gap: 13px; padding-left: 18px; } .rep2 .car { background: #ccc; }

.doctabs { height: 26px; border-top: 1px solid #f2f2f4; border-bottom: 1px solid #f2f2f4; display: grid; align-items: center; padding-left: 9px; grid-template-columns: 36px 19px 108px 19px 5px 16px; }
.blue { color: #92c6fb; }
.dot { width: 6px; height: 6px; border-radius: 50%; background: #ffa5a5; }
.sep { width: 1px; height: 24px; background: #f0f0f2; }
.work { height: 482px; display: flex; }
.stage { margin-top: -1px; flex: none; overflow: hidden; }
.stage text.lab { font-size: 9.5px; fill: #b9b9bb; }
.node { fill: #fff; stroke: #25284f; stroke-width: 1; }
.wire { fill: none; stroke: #151515; stroke-width: 1; }
.ar, .arf { font-family: "DejaVu Sans", sans-serif; }
.ar { font-size: 11px; fill: #1a1a1a; text-anchor: middle; }
.vscroll { width: 12px; border-left: 1px solid #f3f3f5; }
.vscroll i { display: block; width: 8px; height: 217px; margin: 90px 0 0 1px; border-radius: 4px; background: #f0f0f2; }
.hscroll { height: 13px; display: flex; padding-top: 3px; }
.hscroll i { width: 1336px; height: 8px; border-radius: 4px; background: #f0f0f2; }
.hscroll b { width: 13px; height: 13px; margin: -3px 0 0 17px; background: #f8f8fa; }
.palette { height: 17px; border-top: 1px solid #f6f6f8; padding-left: 11px; display: flex; }
.palette > svg { margin-right: 2px; flex: none; }
#swatches { width: 1317px; display: grid; grid-template-columns: repeat(90, 1fr); padding-top: 1px; }
#swatches i { width: 13px; height: 14px; border-radius: 2px; }
.pagebar { height: 35px; background: linear-gradient(#f4f4f9, #f0f0f6 70%, #e9e9ef); display: grid; align-items: center; padding-left: 16px;
  grid-template-columns: 41px 96px 34px 51px 723px 38px 25px 47px 34px 31px 16px 146px 31px 18px; }
.taskbar { height: 40px; background: linear-gradient(#949596, #8b8c8e 25%, #8b8c8e); display: grid; grid-template-columns: 42px 86px 27px 24px 25px 25px 697px 440px; align-items: center; color: #fff; font-family: "DejaVu Sans", sans-serif; }
.clock { font-size: 10.5px; display: flex; flex-direction: column; align-items: center; line-height: 17px; }
.date { letter-spacing: -.3px; }
.lang { text-align: center; font-size: 12px; padding-right: 14px; }
.s { fill: none; stroke: #fff; stroke-width: 1; }
.apps { display: flex; height: 40px; gap: 1px; }
.a { width: 48px; height: 40px; display: flex; align-items: center; justify-content: center; flex: none; }
.hot { background: #a4a5a7; border-bottom: 2px solid #b1d5f4; padding-top: 2px; }
.u { background: linear-gradient(#b1d5f4, #b1d5f4) 50% 100% / 40px 2px no-repeat; }
```
FILE: script.js
```js
const NS = 'http://www.w3.org/2000/svg';
function add(parent, tag, attrs, text) {
  const e = document.createElementNS(NS, tag);
  for (const k in attrs) e.setAttribute(k, attrs[k]);
  if (text !== undefined) e.textContent = text;
  parent.appendChild(e);
}
const ruler = document.getElementById('ruler');
const grid = document.getElementById('grid');
const X = n => Math.floor(183.6 + 3.3643 * n) + 0.5;
const Y = n => Math.floor(160.4 + 3.3643 * n) + 0.5;
const line = (g, d, c) => add(g, 'path', { d, stroke: c });

// Horizontal and vertical rulers
line(ruler, 'M0 197.5H1354M17.500 181V197', '#efeff1');
for (let n = -45; n <= 345; n += 5) {
  line(ruler, `M${X(n)} ${n % 10 ? 190 : 181}V197`, '#ececee');
  if (n % 10 === 0) add(ruler, 'text', { x: X(n) + 1.5, y: 190, class: 'lab' }, n);
}
add(ruler, 'text', { x: 17.5, y: 190, class: 'lab' }, -50);
for (let n = 15; n <= 145; n += 5) {
  line(ruler, `M${n % 10 ? 10 : 0} ${Y(n)}H17`, '#ececee');
  if (n % 10 === 0) add(ruler, 'text', { transform: `translate(9 ${Y(n) + (n > 99 ? 17 : 12)}) rotate(-90)`, class: 'lab' }, n);
}
add(ruler, 'text', { transform: 'translate(9 206) rotate(-90)', class: 'lab' }, 10);
add(ruler, 'rect', { x: 0, y: 186, width: 16, height: 11, fill: '#fff' });

for (const step of [5, 10]) {
  const faint = step === 5 ? '#f7f7f7' : '#ededed';
  const strong = step === 5 ? '#ececec' : '#d9d9d9';
  for (let n = 10; n <= 285; n += step) {
    const x = X(n), inside = x > 318 && x < 852;
    line(grid, `M${x} 198V663`, faint);
    if (inside) line(grid, `M${x} 194V660`, strong);
  }
  for (let n = 15; n <= 145; n += 5) {
    if (step === 10 && n % 10) continue;
    line(grid, `M217 ${Y(n)}H1148`, faint);
    line(grid, `M318 ${Y(n)}H852`, strong);
  }
}
line(grid, 'M1148.500 198V663', '#ededed');
line(grid, 'M318 197.500H852', '#e4e4e4');

// Quick colour palette
const colors = ('d98f98 e88d9f f4a8b5 fdb6c6 fad0d9 9bc4cc a2d6e1 a6e2ed b3ecf6 d3f7fe f8ae9b ffc3a5 ffce93 ffdd91 fbe3b5 ' +
  '93cdc5 94dbd0 94e8da b7ede4 c6f5ed d09db8 e3accb f2b8d8 fcc6e6 f8e2ef b5c894 c0d59b cfe09b dae8a9 e9f0cd ' +
  '9b9ddb a5a8ed bba9fa cbbcf9 d8ccfa fde489 fdeb9f f6f49b fcfaac fefdc6 d1aeec e1acf3 e9bbfd dfc5fb eed4fe ' +
  'a1c4aa a5d5b3 addac2 b6e1c5 ccead8 f4a29f fdaba6 fbb6b9 fec1c1 fecbc8 9ba9d7 a1b0ea a4b9f9 b5c8fd c5dafa ' +
  'c2a189 d2a68a d9a79c eab2a6 f3bdb2 94c9ec 9ed2fb a9daff a3e9fe b5f2ff c1aea1 d0b4a7 dfbdae ecc7b4 fbceb8 ' +
  'c9c4c2 dbd9d0 e7e7dd f3f0e9 fbf8ef 949494 a0a0a0 a9a9a9 b3b3b3 c3c3c3 dfdfdf e7e7e7 eeeeee f3f3f3 fafafa').split(' ');
for (const c of colors) {
  const e = document.createElement('i');
  e.style.background = '#' + c;
  document.getElementById('swatches').appendChild(e);
}

// Fit UI labels to their design widths through letter spacing
for (const e of document.querySelectorAll('.t[data-w]')) {
  const n = e.textContent.length;
  const w = e.getBoundingClientRect().width;
  e.style.letterSpacing = (e.dataset.w - w) / n + 'px';
}
```
